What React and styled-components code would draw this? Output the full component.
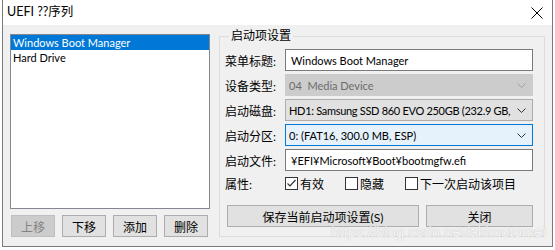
import React from 'react';
import styled, { createGlobalStyle } from 'styled-components';

const GlobalStyle = createGlobalStyle`
  html, body {
    margin: 0;
    padding: 0;
    background: #ffffff;
  }
  body {
    font-family: Lato, "Noto Sans CJK SC", sans-serif;
    font-size: 12px;
    color: #000;
  }
`;

const Window = styled.div`
  margin-left: 2px;
  width: 549px;
  height: 246px;
  border: 1px solid #7a7a7a;
  border-top: none;
  background: #f0f0f0;
  display: flex;
  flex-direction: column;
  position: relative;
  overflow: hidden;
`;

const TitleBar = styled.div`
  height: 25px;
  background: #fff;
  display: flex;
  align-items: center;
  justify-content: space-between;
  padding: 0 9px 0 4px;
  flex-shrink: 0;
`;

const Caption = styled.div`
  font-size: 12.5px;
  line-height: 1;
`;

const Body = styled.div`
  display: flex;
  gap: 9px;
  padding: 9px 7px 0 7px;
`;

const LeftColumn = styled.div`
  width: 200px;
  display: flex;
  flex-direction: column;
  gap: 6px;
`;

const ListBox = styled.div`
  height: 173px;
  border: 1px solid #828790;
  background: #fff;
`;

const ListItem = styled.div`
  height: 15px;
  line-height: 15px;
  padding-left: 2px;
  font-size: 11px;
  background: ${(p) => (p.$selected ? '#0078d7' : 'transparent')};
  color: ${(p) => (p.$selected ? '#fff' : '#000')};
  white-space: nowrap;
`;

const ButtonRow = styled.div`
  display: flex;
  gap: 7px;
  padding-left: 1px;
`;

const Button = styled.button`
  font: inherit;
  font-size: 12px;
  width: ${(p) => p.$w || 44}px;
  height: 22px;
  padding: 0;
  background: ${(p) => (p.disabled ? '#cccccc' : '#e1e1e1')};
  border: 1px solid ${(p) => (p.disabled ? '#bfbfbf' : '#adadad')};
  color: ${(p) => (p.disabled ? '#838383' : '#000')};
`;

const Group = styled.fieldset`
  margin: -5px 0 0 0;
  width: 326px;
  height: 208px;
  box-sizing: border-box;
  border: 1px solid #dcdcdc;
  padding: 0 10px 0 5px;
  min-width: 0;
`;

const Legend = styled.legend`
  padding: 0 2px;
  margin-left: 4px;
  font-size: 12px;
  line-height: 14px;
`;

const Form = styled.div`
  display: grid;
  grid-template-columns: 60px 248px;
  row-gap: 3px;
  margin-top: 6px;
  align-items: center;
`;

const Label = styled.div`
  white-space: nowrap;
`;

const TextBox = styled.div`
  height: 22px;
  box-sizing: border-box;
  border: 1px solid #7a7a7a;
  background: #fff;
  display: flex;
  align-items: center;
  padding-left: 5px;
  font-size: 11px;
  white-space: nowrap;
`;

const Combo = styled.div`
  height: 22px;
  box-sizing: border-box;
  border: 1px solid
    ${(p) => (p.$state === 'focus' ? '#0078d7' : p.$state === 'disabled' ? '#cccccc' : '#adadad')};
  background: ${(p) =>
    p.$state === 'focus' ? '#e5f1fb' : p.$state === 'disabled' ? '#cccccc' : '#e1e1e1'};
  color: ${(p) => (p.$state === 'disabled' ? '#6d6d6d' : '#000')};
  display: flex;
  align-items: center;
  gap: 3px;
  padding: 0 6px 0 3px;
  font-size: 11px;
  letter-spacing: ${(p) => (p.$tight ? '-0.3px' : 'normal')};
  white-space: nowrap;
  overflow: hidden;
`;

const ComboText = styled.span`
  flex: 1;
  overflow: hidden;
`;

const Chevron = ({ color }) => (
  <svg width="9" height="5" viewBox="0 0 9 5">
    <path d="M0.5 0.5 L4.5 4.5 L8.5 0.5" fill="none" stroke={color} strokeWidth="1" />
  </svg>
);

const CheckRow = styled.div`
  display: flex;
  align-items: center;
  height: 18px;
`;

const Check = styled.label`
  display: flex;
  align-items: center;
  gap: 2px;
  width: ${(p) => p.$w}px;
`;

const Box = styled.span`
  width: 13px;
  height: 13px;
  box-sizing: border-box;
  border: 1px solid #333;
  background: #fff;
  display: flex;
  align-items: center;
  justify-content: center;
`;

const ActionRow = styled.div`
  display: flex;
  gap: 7px;
  margin-top: 13px;
  padding-left: 2px;
`;

const Watermark = styled.div`
  position: absolute;
  right: 6px;
  bottom: 6px;
  font-family: "Liberation Sans", sans-serif;
  font-size: 15px;
  line-height: 16px;
  color: rgba(255, 255, 255, 0.85);
  text-shadow: 0 0 1px rgba(120, 120, 120, 0.5);
  pointer-events: none;
`;

const CheckBox = ({ checked, w, children }) => (
  <Check $w={w}>
    <Box>
      {checked && (
        <svg width="11" height="11" viewBox="0 0 11 11">
          <path d="M1.5 5.5 L4 8 L9.5 2" fill="none" stroke="#333" strokeWidth="1.2" />
        </svg>
      )}
    </Box>
    {children}
  </Check>
);

export default function App() {
  return (
    <>
      <GlobalStyle />
      <Window>
        <TitleBar>
          <Caption>UEFI ??序列</Caption>
          <svg width="12" height="12" viewBox="0 0 12 12">
            <path d="M0.5 0.5 L11.5 11.5 M11.5 0.5 L0.5 11.5" stroke="#000" strokeWidth="1" />
          </svg>
        </TitleBar>
        <Body>
          <LeftColumn>
            <ListBox>
              <ListItem $selected>Windows Boot Manager</ListItem>
              <ListItem>Hard Drive</ListItem>
            </ListBox>
            <ButtonRow>
              <Button disabled>上移</Button>
              <Button>下移</Button>
              <Button>添加</Button>
              <Button>删除</Button>
            </ButtonRow>
          </LeftColumn>
          <Group>
            <Legend>启动项设置</Legend>
            <Form>
              <Label>菜单标题:</Label>
              <TextBox>Windows Boot Manager</TextBox>
              <Label>设备类型:</Label>
              <Combo $state="disabled">
                <ComboText>04&nbsp;&nbsp;Media Device</ComboText>
                <Chevron color="#a0a0a0" />
              </Combo>
              <Label>启动磁盘:</Label>
              <Combo $tight>
                <ComboText>HD1: Samsung SSD 860 EVO 250GB (232.9 GB,</ComboText>
                <Chevron color="#333" />
              </Combo>
              <Label>启动分区:</Label>
              <Combo $state="focus">
                <ComboText>0: (FAT16, 300.0 MB, ESP)</ComboText>
                <Chevron color="#333" />
              </Combo>
              <Label>启动文件:</Label>
              <TextBox>¥EFI¥Microsoft¥Boot¥bootmgfw.efi</TextBox>
              <Label>属性:</Label>
              <CheckRow>
                <CheckBox checked w={60}>有效</CheckBox>
                <CheckBox w={60}>隐藏</CheckBox>
                <CheckBox w={120}>下一次启动该项目</CheckBox>
              </CheckRow>
            </Form>
            <ActionRow>
              <Button $w={192}>保存当前启动项设置(S)</Button>
              <Button $w={107}>关闭</Button>
            </ActionRow>
          </Group>
        </Body>
        <Watermark>https://blog.csdn.net/akimotomei</Watermark>
      </Window>
    </>
  );
}
